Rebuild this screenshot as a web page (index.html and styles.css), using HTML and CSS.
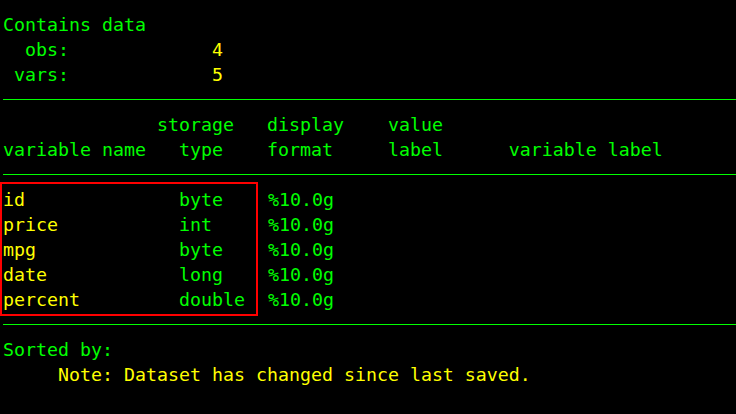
FILE: index.html
```html
<!DOCTYPE html>
<html lang="en">
<head>
<meta charset="utf-8">
<title>describe</title>
<link rel="stylesheet" href="styles.css">
</head>
<body>
<main class="console">
  <div class="line g">Contains data</div>
  <div class="line"><span class="g">  obs:</span>             <span class="y">4</span></div>
  <div class="line"><span class="g"> vars:</span>             <span class="y">5</span></div>
  <div class="rule"></div>
  <div class="line g">              storage   display    value</div>
  <div class="line g">variable name   type    format     label      variable label</div>
  <div class="rule"></div>
  <section class="data">
    <div class="highlight">
      <div class="line"><span class="y">id</span>              <span class="g">byte</span></div>
      <div class="line"><span class="y">price</span>           <span class="g">int</span></div>
      <div class="line"><span class="y">mpg</span>             <span class="g">byte</span></div>
      <div class="line"><span class="y">date</span>            <span class="g">long</span></div>
      <div class="line"><span class="y">percent</span>         <span class="g">double</span></div>
    </div>
    <div class="formats g">
      <div class="line">%10.0g</div>
      <div class="line">%10.0g</div>
      <div class="line">%10.0g</div>
      <div class="line">%10.0g</div>
      <div class="line">%10.0g</div>
    </div>
  </section>
  <div class="rule"></div>
  <div class="line g">Sorted by:</div>
  <div class="line y">     Note: Dataset has changed since last saved.</div>
</main>
</body>
</html>
```
FILE: styles.css
```css
html, body {
  margin: 0;
  padding: 0;
  background: #000;
  width: 736px;
  height: 414px;
  overflow: hidden;
}

.console {
  padding: 12px 0 0 3px;
  font-family: "DejaVu Sans Mono", "Liberation Mono", monospace;
  font-size: 18.27px;
  line-height: 25px;
}

.line {
  height: 25px;
  white-space: pre;
}

.g { color: #00ff00; }
.y { color: #ffff00; }

.rule {
  height: 25px;
  display: flex;
  align-items: center;
}
.rule::before {
  content: "";
  flex: 1;
  height: 1px;
  background: #00ff00;
}

.data {
  display: flex;
}

.highlight {
  box-sizing: border-box;
  width: 258px;
  margin: -5px 0 -4px -3px;
  padding: 3px 0 2px 1px;
  border: 2px solid #ff0000;
}

.formats {
  margin-left: 10px;
}
```
